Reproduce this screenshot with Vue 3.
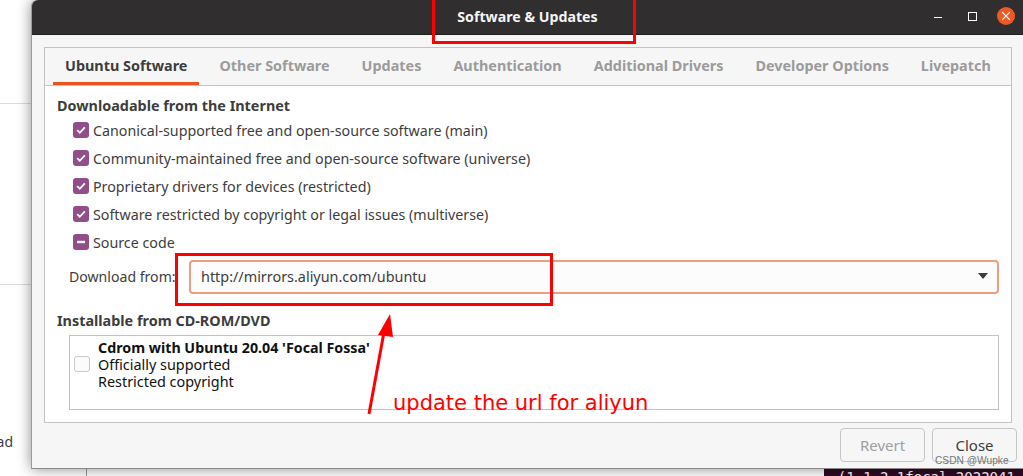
<script setup>
const tabs = ['Ubuntu Software', 'Other Software', 'Updates', 'Authentication', 'Additional Drivers', 'Developer Options', 'Livepatch'];

const sources = [
  { label: 'Canonical-supported free and open-source software (main)', state: 'on' },
  { label: 'Community-maintained free and open-source software (universe)', state: 'on' },
  { label: 'Proprietary drivers for devices (restricted)', state: 'on' },
  { label: 'Software restricted by copyright or legal issues (multiverse)', state: 'on' },
  { label: 'Source code', state: 'mixed' },
];
</script>

<template>
  <div class="desktop">
    <div class="bg-line line-a"></div>
    <div class="bg-line line-b"></div>
    <div class="bg-line line-c"></div>
    <div class="bg-word">ad</div>
    <div class="terminal">- (1.1.2-1focal 2022041</div>

    <div class="window">
      <header class="titlebar">
        <span class="title">Software &amp; Updates</span>
        <div class="win-controls">
          <svg width="10" height="10" viewBox="0 0 10 10" class="min"><path d="M1 6.5h8" stroke="#fff" stroke-width="1" /></svg>
          <svg width="10" height="10" viewBox="0 0 10 10" class="max"><rect x="1.5" y="1.5" width="8" height="8" fill="none" stroke="#fff" stroke-width="1" /></svg>
          <span class="close-btn">
            <svg width="10" height="10" viewBox="0 0 10 10"><path d="M1.2 1.2l7.6 7.6M8.8 1.2l-7.6 7.6" stroke="#fff" stroke-width="1.2" /></svg>
          </span>
        </div>
      </header>

      <div class="body">
        <div class="notebook">
          <nav class="tabs">
            <div v-for="(tab, i) in tabs" :key="tab" class="tab" :class="{ active: i === 0 }">{{ tab }}</div>
          </nav>

          <section class="page">
            <h3 class="heading">Downloadable from the Internet</h3>
            <div class="sources">
              <div v-for="src in sources" :key="src.label" class="source">
                <span class="check" :class="src.state">
                  <svg v-if="src.state === 'on'" width="12" height="12" viewBox="0 0 12 12"><path d="M2.2 6.2l2.6 2.6 5-5.4" fill="none" stroke="#fff" stroke-width="1.8" /></svg>
                  <svg v-else width="12" height="12" viewBox="0 0 12 12"><path d="M2 6h8" stroke="#fff" stroke-width="2.4" /></svg>
                </span>
                <span>{{ src.label }}</span>
              </div>
            </div>

            <div class="download-row">
              <span class="download-label">Download from:</span>
              <div class="combo">
                <span>http://mirrors.aliyun.com/ubuntu</span>
                <svg width="10" height="6" viewBox="0 0 10 6"><path d="M0 0h10L5 6z" fill="#3d3d3d" /></svg>
              </div>
            </div>

            <h3 class="heading cd-heading">Installable from CD-ROM/DVD</h3>
            <div class="cd-list">
              <span class="check off"></span>
              <div class="cd-text">
                <strong>Cdrom with Ubuntu 20.04 'Focal Fossa'</strong>
                <div>Officially supported</div>
                <div>Restricted copyright</div>
              </div>
            </div>
          </section>
        </div>

        <footer class="actions">
          <button class="btn disabled" type="button">Revert</button>
          <button class="btn" type="button">Close</button>
        </footer>
      </div>
    </div>

    <!-- annotations drawn over the screenshot -->
    <div class="mark mark-title"></div>
    <div class="mark mark-url"></div>
    <svg class="arrow" width="40" height="110" viewBox="0 0 40 110">
      <path d="M4 104L19 22" stroke="#f00" stroke-width="3" fill="none" />
      <path d="M25 4L13 25L28 27z" fill="#f00" />
    </svg>
    <div class="note">update the url for aliyun</div>
    <div class="watermark">CSDN @Wupke</div>
  </div>
</template>

<style scoped>
.desktop {
  position: relative;
  width: 1023px;
  height: 476px;
  overflow: hidden;
  background: #fff;
  font-family: "Noto Sans", "Open Sans", sans-serif;
  font-size: 14.25px;
  color: #3d3d3d;
}

.bg-line {
  position: absolute;
  background: #dcdcdc;
}

.line-a {
  left: 0;
  top: 103px;
  width: 32px;
  height: 1px;
}

.line-b {
  left: 0;
  top: 284px;
  width: 32px;
  height: 1px;
}

.line-c {
  left: 86px;
  top: 469px;
  width: 1px;
  height: 7px;
  background: #999;
}

.bg-word {
  position: absolute;
  left: -1px;
  top: 432px;
  font-size: 14px;
  line-height: 20px;
  width: 14px;
  overflow: hidden;
  direction: rtl;
}

.terminal {
  position: absolute;
  left: 824px;
  top: 469px;
  width: 199px;
  height: 7px;
  overflow: hidden;
  background: #300a24;
  color: #fff;
  font-family: "DejaVu Sans Mono", monospace;
  font-size: 14px;
  line-height: 17px;
  text-indent: -3px;
  white-space: nowrap;
}

.window {
  position: absolute;
  left: 31px;
  top: 0;
  width: 992px;
  height: 469px;
  display: flex;
  flex-direction: column;
  background: #f6f6f6;
  border-left: 1px solid #9c9c9c;
  border-bottom: 1px solid #8a8a8a;
  border-top-left-radius: 6px;
  box-sizing: border-box;
  box-shadow: 0 0 14px rgba(0, 0, 0, 0.45);
}

.titlebar {
  position: relative;
  height: 35px;
  flex: none;
  background: #302e2e;
  border-top-left-radius: 6px;
  border-bottom: 1px solid #1d1d1d;
  box-sizing: border-box;
  display: flex;
  align-items: center;
  justify-content: center;
}

.title {
  color: #f4f4f4;
  font-weight: 700;
  font-size: 14.2px;
  margin-bottom: 2px;
}

.win-controls {
  position: absolute;
  right: 8px;
  top: 7px;
  display: flex;
  align-items: center;
}

.win-controls .min {
  margin-right: 24px;
}

.win-controls .max {
  margin-right: 20px;
}

.close-btn {
  width: 18px;
  height: 18px;
  border-radius: 50%;
  background: #ee5a26;
  display: flex;
  align-items: center;
  justify-content: center;
}

.body {
  flex: 1;
  display: flex;
  flex-direction: column;
  padding: 12px 11px 6px 12px;
  min-height: 0;
}

.notebook {
  height: 376px;
  flex: none;
  border: 1px solid #c3c3c3;
  box-sizing: border-box;
  display: flex;
  flex-direction: column;
}

.tabs {
  height: 37px;
  flex: none;
  display: flex;
  padding-left: 8px;
  border-bottom: 1px solid #c3c3c3;
  box-sizing: content-box;
}

.tab {
  padding: 0 12px;
  margin-right: 8px;
  height: 37px;
  box-sizing: border-box;
  line-height: 35px;
  font-weight: 700;
  font-size: 14.4px;
  color: #9b9b9b;
  white-space: nowrap;
}

.tab.active {
  color: #3d3d3d;
  border-bottom: 3px solid #e95420;
}

.page {
  flex: 1;
  background: #fff;
  padding: 10px 11px 0 12px;
}

.heading {
  margin: 0;
  font-size: 14.4px;
  font-weight: 700;
  line-height: 20px;
  color: #3d3d3d;
}

.source {
  height: 28px;
  display: flex;
  align-items: center;
  gap: 4px;
  padding-left: 16px;
  white-space: nowrap;
}

.check {
  width: 16px;
  height: 16px;
  flex: none;
  border-radius: 3px;
  display: flex;
  align-items: center;
  justify-content: center;
  box-sizing: border-box;
}

.check.on,
.check.mixed {
  background: #924d8b;
}

.check.off {
  background: #fbfbfb;
  border: 1px solid #c9c9c9;
  margin-top: 17px;
}

.download-row {
  display: flex;
  align-items: center;
  margin-top: 4px;
  padding-left: 12px;
  height: 34px;
}

.download-label {
  width: 120px;
  flex: none;
  font-size: 14.1px;
  padding-bottom: 2px;
  white-space: nowrap;
}

.combo {
  width: 810px;
  height: 34px;
  flex: none;
  box-sizing: border-box;
  border: 2px solid #ee9c82;
  border-radius: 4px;
  background: #fcfcfc;
  display: flex;
  align-items: center;
  justify-content: space-between;
  padding: 0 9px 2px 10px;
  font-size: 14.4px;
}

.cd-heading {
  margin-top: 17px;
}

.cd-list {
  margin: 4px 0 0 12px;
  width: 930px;
  height: 75px;
  box-sizing: border-box;
  border: 1px solid #c3c3c3;
  display: flex;
  align-items: flex-start;
  gap: 8px;
  padding: 3px 0 0 4px;
}

.cd-text {
  line-height: 17px;
  color: #111;
  font-size: 14.4px;
  white-space: nowrap;
}

.cd-text strong {
  display: block;
  font-size: 14.25px;
}

.actions {
  flex: 1;
  display: flex;
  justify-content: flex-end;
  align-items: flex-end;
  gap: 7px;
  margin-right: -5px;
}

.btn {
  width: 85px;
  height: 34px;
  border: 1px solid #c6c6c6;
  border-radius: 4px;
  background: #f6f6f6;
  font-family: inherit;
  font-size: 15px;
  color: #3d3d3d;
  padding: 0;
}

.btn.disabled {
  color: #a0a0a0;
}

.mark {
  position: absolute;
  border: 3px solid #f00;
  box-sizing: border-box;
}

.mark-title {
  left: 432px;
  top: -6px;
  width: 204px;
  height: 50px;
}

.mark-url {
  left: 175px;
  top: 253px;
  width: 378px;
  height: 53px;
}

.arrow {
  position: absolute;
  left: 365px;
  top: 310px;
}

.note {
  position: absolute;
  left: 393px;
  top: 389px;
  color: #f00;
  font-family: "DejaVu Sans", sans-serif;
  font-size: 21px;
  line-height: 28px;
  white-space: nowrap;
}

.watermark {
  position: absolute;
  left: 935px;
  top: 453px;
  color: #777;
  font-family: "Liberation Sans", sans-serif;
  font-size: 10.2px;
  line-height: 15px;
  white-space: nowrap;
}
</style>

<style>
html, body {
  margin: 0;
  overflow: hidden;
}
</style>
